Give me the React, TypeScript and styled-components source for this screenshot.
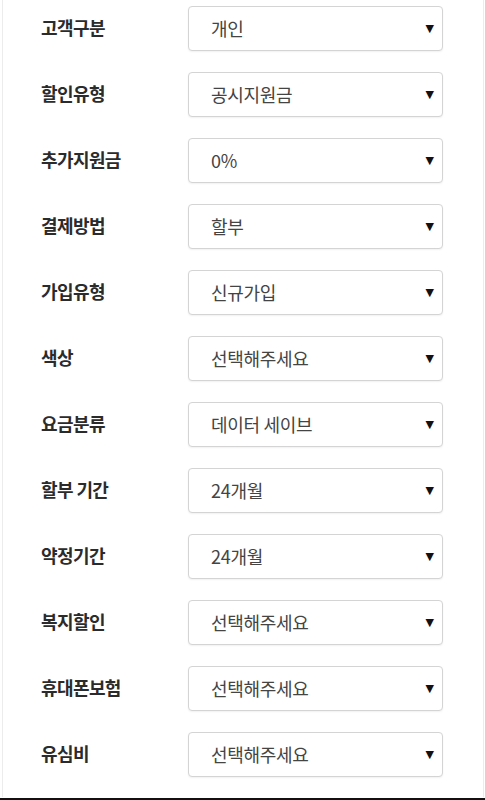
import React from "react";
import styled, { createGlobalStyle } from "styled-components";

const Global = createGlobalStyle`
  html, body { margin: 0; padding: 0; background: #fff; }
  body { font-family: "Noto Sans CJK KR", "Noto Sans", sans-serif; }
`;

const Page = styled.div`
  width: 485px;
  height: 800px;
  display: flex;
  flex-direction: column;
  background: #fff;
`;

const Panel = styled.div`
  flex: 1;
  margin: 0 1px 0 2px;
  border-left: 1px solid #ececec;
  border-right: 1px solid #ececec;
  padding: 6px 0 0 0;
  display: flex;
  flex-direction: column;
  gap: 21px;
`;

const BottomLine = styled.div`
  height: 2px;
  background: #111;
  margin-top: 1px;
`;

const Row = styled.div`
  display: grid;
  grid-template-columns: 185px 255px;
  align-items: center;
  height: 45px;
`;

const Label = styled.div`
  padding-left: 38px;
  font-size: 18px;
  line-height: 1;
  font-weight: 700;
  color: #2b2b2b;
  letter-spacing: -0.6px;
  margin-top: -4px;
`;

const SelectBox = styled.div`
  box-sizing: border-box;
  height: 45px;
  border: 1px solid #d4d4d4;
  border-radius: 4px;
  box-shadow: 0 1px 2px rgba(0, 0, 0, 0.06);
  background: #fff;
  display: flex;
  align-items: center;
  justify-content: space-between;
  padding: 0 8px 0 22px;
`;

const Value = styled.span`
  font-size: 18px;
  line-height: 1;
  color: #444;
  letter-spacing: -0.3px;
  margin-top: -2px;
`;

const Arrow = styled.span`
  font-family: "DejaVu Sans", sans-serif;
  font-size: 11px;
  line-height: 1;
  color: #111;
`;

const rows: [string, string][] = [
  ["고객구분", "개인"],
  ["할인유형", "공시지원금"],
  ["추가지원금", "0%"],
  ["결제방법", "할부"],
  ["가입유형", "신규가입"],
  ["색상", "선택해주세요"],
  ["요금분류", "데이터 세이브"],
  ["할부 기간", "24개월"],
  ["약정기간", "24개월"],
  ["복지할인", "선택해주세요"],
  ["휴대폰보험", "선택해주세요"],
  ["유심비", "선택해주세요"],
];

export default function App() {
  return (
    <>
      <Global />
      <Page>
        <Panel>
          {rows.map(([label, value]) => (
            <Row key={label}>
              <Label>{label}</Label>
              <SelectBox>
                <Value>{value}</Value>
                <Arrow>▼</Arrow>
              </SelectBox>
            </Row>
          ))}
        </Panel>
        <BottomLine />
      </Page>
    </>
  );
}
